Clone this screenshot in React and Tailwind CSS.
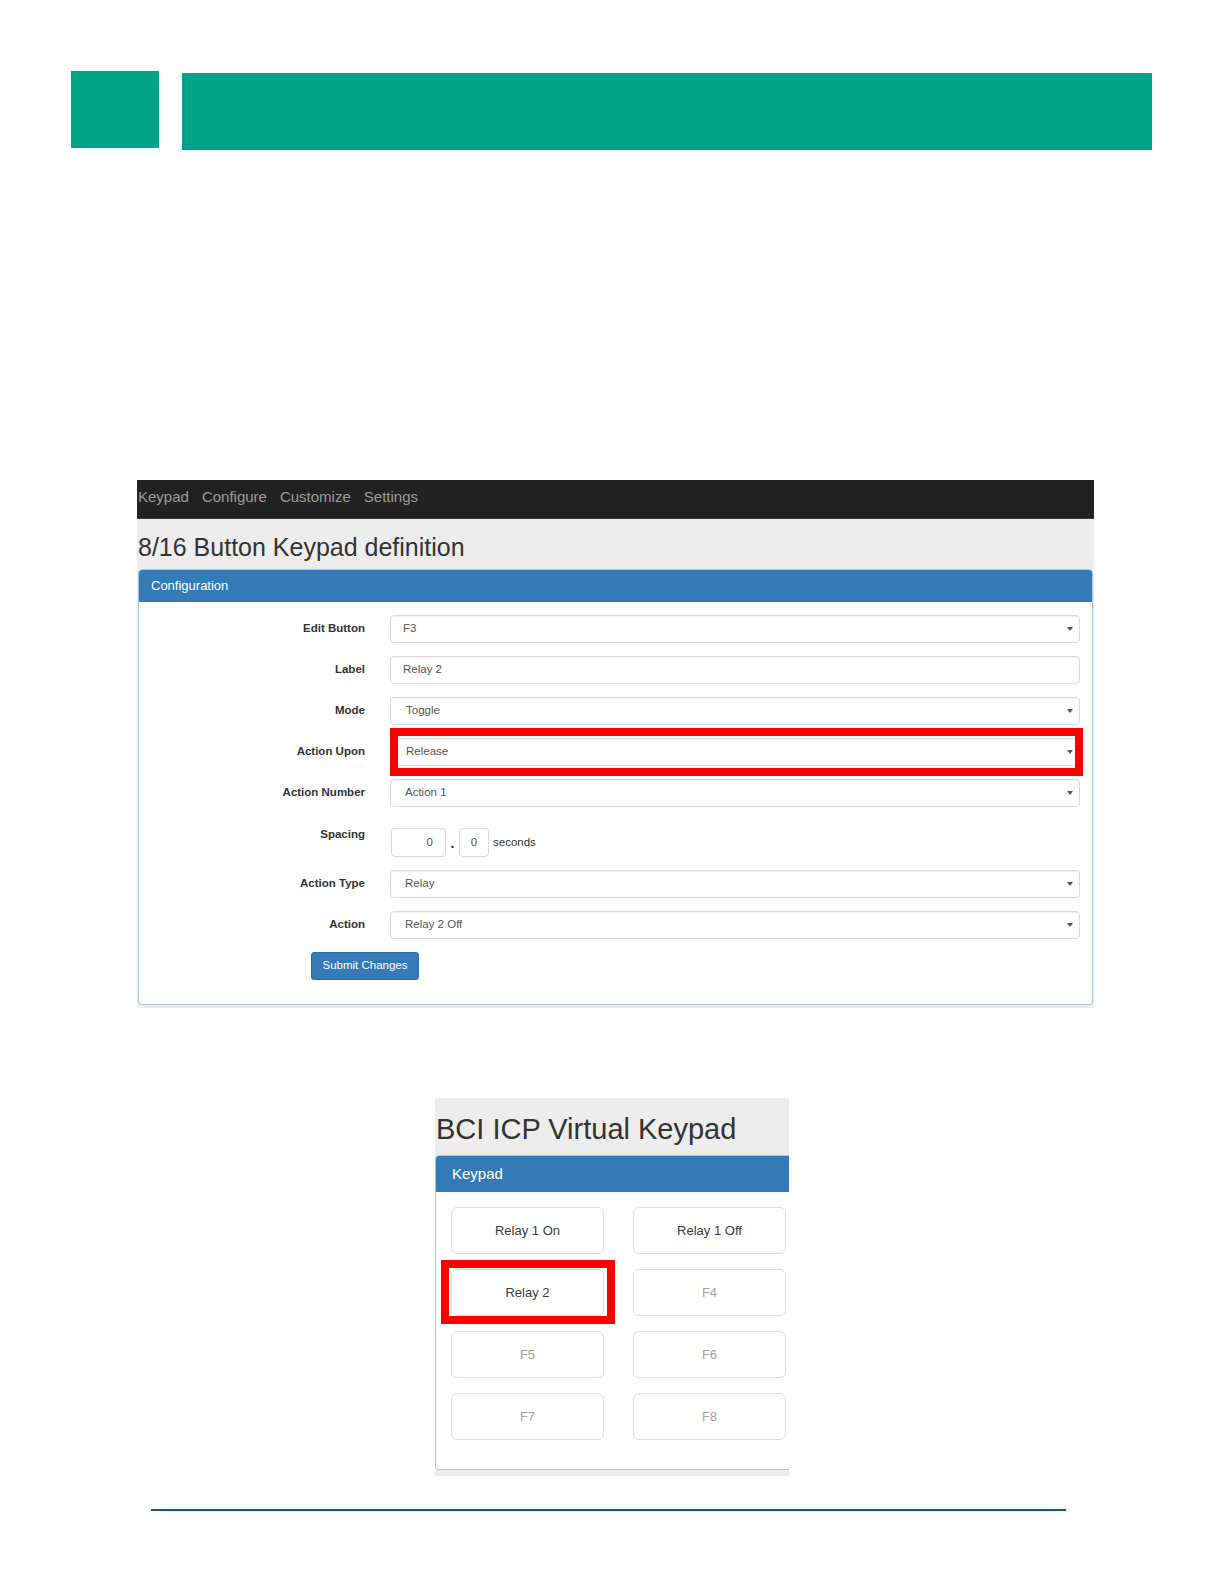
import React from "react";

function Arrow() {
  return (
    <svg width="6" height="5" viewBox="0 0 6 5" className="absolute right-[6px] top-1/2 -translate-y-1/2">
      <path d="M0 0.5 L6 0.5 L3 4.5 Z" fill="#555" />
    </svg>
  );
}

function Field({ value, select = true, indent = "pl-[12px]" }) {
  return (
    <div className={`relative flex-1 h-[28px] flex items-center ${indent} bg-white border border-[#d9d9d9] rounded-[4px] shadow-[inset_0_1px_1px_rgba(0,0,0,0.06)] text-[11.5px] text-[#555]`}>
      {value}
      {select && <Arrow />}
    </div>
  );
}

function Row({ label, children }) {
  return (
    <div className="flex items-center h-[28px]">
      <div className="w-[226px] text-right font-bold text-[11.5px] text-[#333]">{label}</div>
      <div className="ml-[25px] flex-1 flex items-center relative">{children}</div>
    </div>
  );
}

function KeyBtn({ label, dim }) {
  return (
    <div className={`h-[47px] w-[153px] flex items-center justify-center bg-white border border-[#dedede] rounded-[6px] text-[13px] ${dim ? "text-[#a0a0a0]" : "text-[#3a3a3a]"}`}>
      {label}
    </div>
  );
}

export default function App() {
  return (
    <div className="w-[1225px] h-[1585px] bg-white font-['Liberation_Sans',Arial,sans-serif] overflow-hidden">
      {/* header blocks */}
      <div className="flex items-start pt-[71px] pl-[71px] gap-[23px]">
        <div className="w-[88px] h-[77px] bg-[#01a387]" />
        <div className="w-[970px] h-[77px] mt-[2px] bg-[#01a387]" />
      </div>

      {/* screenshot 1 */}
      <div className="ml-[137px] mt-[330px] w-[957px] bg-[#ededed]">
        <div className="h-[39px] bg-[#222222] border-b border-[#3a3a3a] flex items-center gap-[13px] pl-[1px] pb-[3px] text-[15px] text-[#9d9d9d]">
          <span>Keypad</span>
          <span>Configure</span>
          <span>Customize</span>
          <span>Settings</span>
        </div>
        <div className="pt-[13px] pl-[1px] text-[25px] leading-[30px] text-[#333]">8/16 Button Keypad definition</div>
        <div className="mt-[7px] ml-[1px] mr-[1px] bg-white border border-[#a9c7e4] rounded-[4px]">
          <div className="h-[32px] bg-[#337ab7] rounded-t-[3px] flex items-center pl-[12px] text-[13px] text-white">Configuration</div>
          <div className="pt-[13px] pb-[24px] pr-[12px] flex flex-col gap-[13px]">
            <Row label="Edit Button"><Field value="F3" /></Row>
            <Row label="Label"><Field value="Relay 2" select={false} /></Row>
            <Row label="Mode"><Field value="Toggle" indent="pl-[15px]" /></Row>
            <Row label="Action Upon">
              <Field value="Release" indent="pl-[15px]" />
              <div className="absolute left-0 top-[-10px] w-[693px] h-[48px] border-[8px] border-[#ff0000]" />
            </Row>
            <Row label="Action Number"><Field value="Action 1" indent="pl-[14px]" /></Row>
            <div className="flex items-start h-[29px] mt-[8px]">
              <div className="w-[226px] text-right font-bold text-[11.5px] leading-[16px] text-[#333] -mt-[2px]">Spacing</div>
              <div className="ml-[26px] flex items-center">
                <div className="w-[55px] h-[29px] flex items-center justify-end pr-[12px] border border-[#d9d9d9] rounded-[4px] text-[11.5px] text-[#555]">0</div>
                <div className="w-[13px] text-center font-bold text-[14px] text-[#333] leading-none">.</div>
                <div className="w-[30px] h-[29px] flex items-center justify-center border border-[#d9d9d9] rounded-[4px] text-[11.5px] text-[#555]">0</div>
                <div className="ml-[4px] text-[11.5px] text-[#333]">seconds</div>
              </div>
            </div>
            <Row label="Action Type"><Field value="Relay" indent="pl-[14px]" /></Row>
            <Row label="Action"><Field value="Relay 2 Off" indent="pl-[14px]" /></Row>
            <div className="ml-[172px] w-[108px] h-[28px] flex items-center justify-center bg-[#337ab7] border border-[#2e6da4] rounded-[3px] text-[11.5px] text-white">Submit Changes</div>
          </div>
        </div>
        <div className="h-[3px]" />
      </div>

      {/* screenshot 2 */}
      <div className="ml-[435px] mt-[90px] w-[354px] bg-[#ededed] overflow-hidden">
        <div className="pt-[14px] pl-[1px] text-[29px] leading-[34px] text-[#333] whitespace-nowrap">BCI ICP Virtual Keypad</div>
        <div className="mt-[9px] w-[370px] bg-white border border-[#a9c7e4] rounded-[4px]">
          <div className="h-[36px] bg-[#337ab7] rounded-t-[3px] flex items-center pl-[16px] text-[15px] text-white">Keypad</div>
          <div className="pt-[15px] pb-[29px] pl-[15px] grid grid-cols-[153px_153px] gap-x-[29px] gap-y-[15px]">
            <KeyBtn label="Relay 1 On" />
            <KeyBtn label="Relay 1 Off" />
            <div className="relative">
              <KeyBtn label="Relay 2" />
              <div className="absolute left-[-10px] top-[-9px] w-[174px] h-[64px] border-[8px] border-[#ff0000]" />
            </div>
            <KeyBtn label="F4" dim />
            <KeyBtn label="F5" dim />
            <KeyBtn label="F6" dim />
            <KeyBtn label="F7" dim />
            <KeyBtn label="F8" dim />
          </div>
        </div>
        <div className="h-[6px]" />
      </div>

      {/* footer line */}
      <div className="ml-[151px] mt-[33px] w-[915px] h-[2px] bg-[#0b5d7c]" />
    </div>
  );
}
